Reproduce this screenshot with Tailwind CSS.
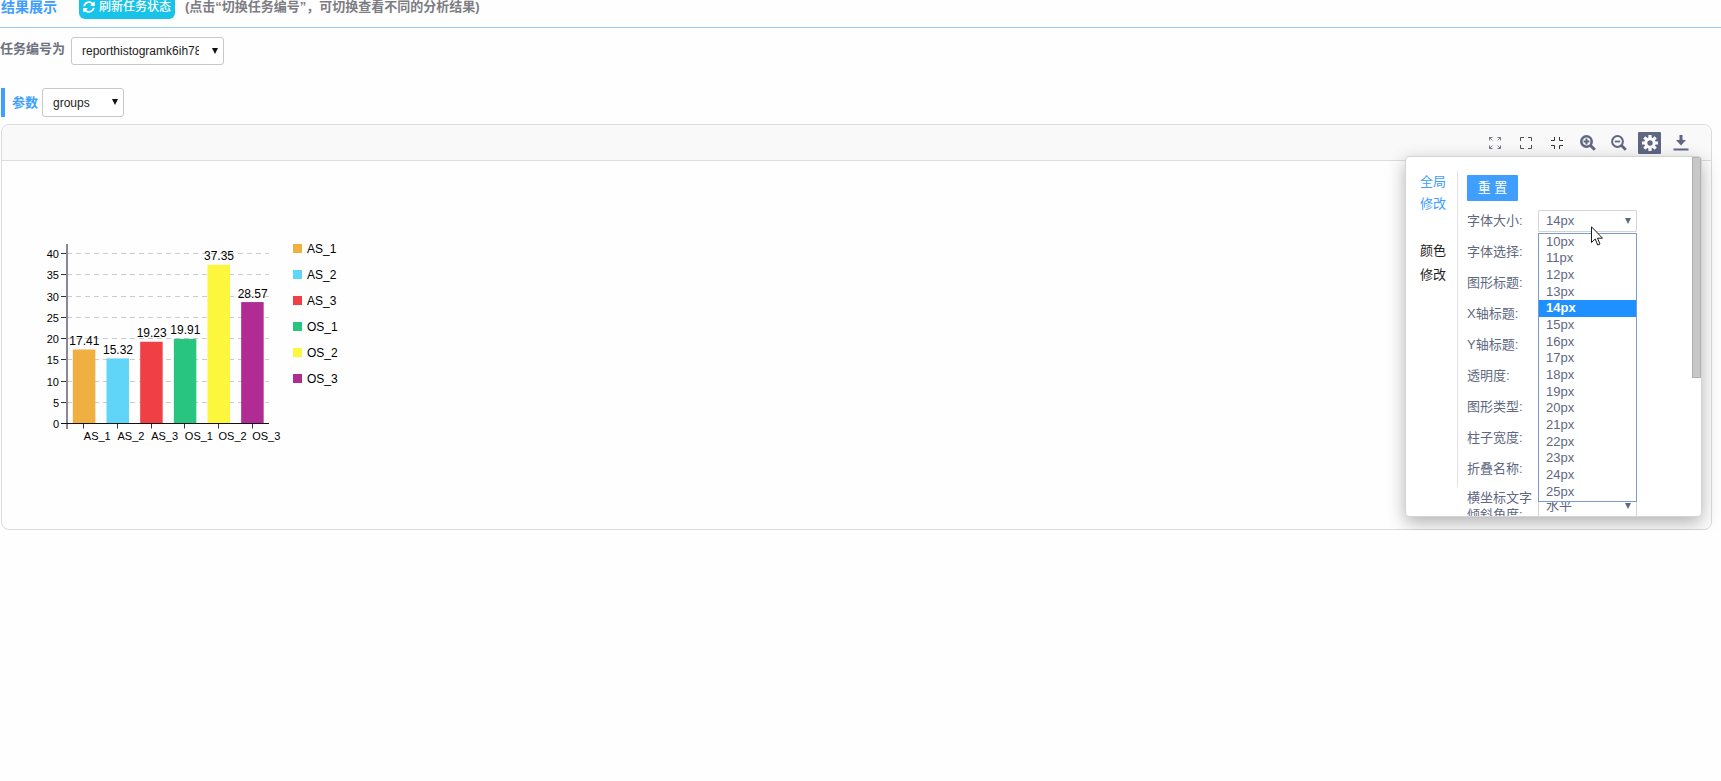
<!DOCTYPE html>
<html lang="zh-CN">
<head>
  <meta charset="UTF-8" />
  <meta name="viewport" content="width=device-width, initial-scale=1.0"/>
  <title>结果展示</title>
  <script src="https://cdn.jsdelivr.net/npm/@tailwindcss/browser@4"></script>
  <style>
    body {
      font-family: 'Liberation Sans', 'Noto Sans CJK SC', sans-serif;
    }
  </style>
</head>
<body class="bg-[#fefefe] text-[13px] text-[#606880] overflow-hidden">
  <div class="flex flex-col">
    <header class="-mt-[13px] h-[41px] flex items-center border-b border-[#9cccf8]">
      <h2 class="ml-px text-sm font-bold text-[#409eff]">结果展示</h2>
      <button type="button" class="ml-[22px] h-6 px-1 flex items-center gap-1 rounded-md bg-[#17c3e8] text-xs font-medium text-white">
        <svg class="w-3 h-3" viewBox="0 0 512 512" fill="currentColor">
          <path d="M370.72 133.28C339.458 104.008 298.888 87.962 255.848 88c-77.458.068-144.328 53.178-162.791 126.85-1.344 5.363-6.122 9.15-11.651 9.15H24.103c-7.498 0-13.194-6.807-11.807-14.176C33.933 94.924 134.813 8 256 8c66.448 0 126.791 26.136 171.315 68.685L463.03 40.97C478.149 25.851 504 36.559 504 57.941V192c0 13.255-10.745 24-24 24H345.941c-21.382 0-32.09-25.851-16.971-40.971l41.75-41.749zM32 296h134.059c21.382 0 32.09 25.851 16.971 40.971l-41.75 41.75c31.262 29.273 71.835 45.319 114.876 45.28 77.418-.07 144.315-53.144 162.787-126.849 1.344-5.363 6.122-9.15 11.651-9.15h57.304c7.498 0 13.194 6.807 11.807 14.176C478.067 417.076 377.187 504 256 504c-66.448 0-126.791-26.136-171.315-68.685L48.97 471.03C33.851 486.149 8 475.441 8 454.059V320c0-13.255 10.745-24 24-24z"/>
        </svg>
        刷新任务状态
      </button>
      <span class="ml-[10px] font-bold text-[#7c7c82]">(点击“切换任务编号”，可切换查看不同的分析结果)</span>
    </header>

    <div class="mt-[9px] flex items-start">
      <label for="task" class="w-[71px] leading-6 font-bold text-[#6c7280]">任务编号为</label>
      <div class="relative">
        <select id="task" class="appearance-none block w-[153px] h-7 pl-[10px] pr-6 border border-[#c8c8c8] rounded-[3px] bg-white text-xs text-[#222]">
          <option>reporthistogramk6ih78v2</option>
        </select>
        <svg class="absolute right-[6px] top-[11px] w-[6px] h-[6px] pointer-events-none" viewBox="0 0 6 6"><path d="M0 0h6L3 6z" fill="#111"/></svg>
      </div>
    </div>

    <div class="mt-[23px] ml-px h-[29px] flex items-center border-l-4 border-[#409eff]">
      <label for="param" class="pl-[7px] w-[37px] whitespace-nowrap font-bold text-[#409eff]">参数</label>
      <div class="relative">
        <select id="param" class="appearance-none block w-[82px] h-[29px] pl-[10px] pr-6 border border-[#c8c8c8] rounded-[3px] bg-white text-xs text-[#222]">
          <option>groups</option>
        </select>
        <svg class="absolute right-[6px] top-[11px] w-[6px] h-[6px] pointer-events-none" viewBox="0 0 6 6"><path d="M0 0h6L3 6z" fill="#111"/></svg>
      </div>
    </div>

    <section class="relative mt-[7px] ml-px mr-[9px] border border-[#dcdcdc] rounded-lg">
      <!-- toolbar -->
      <div class="h-9 pr-[19px] flex items-center justify-end gap-2 rounded-t-lg border-b border-[#dcdcdc] bg-[#f9f9f9] text-[#5f6783]">
        <button type="button" aria-label="放大画布" class="w-[23px] h-[22px] flex items-center justify-center">
          <svg class="w-3 h-3" viewBox="0 0 12 12" fill="none" stroke="#777b84"><path d="M.5 3.5v-3h3M.5.5l3 3M8.500 .5h3v3M11.500 .5l-3 3M.5 8.500v3h3M.5 11.500l3-3M11.500 8.500v3h-3M11.500 11.500l-3-3"/></svg>
        </button>
        <button type="button" aria-label="全屏" class="w-[23px] h-[22px] flex items-center justify-center">
          <svg class="w-3 h-3" viewBox="0 0 12 12" fill="none" stroke="#4c5058"><path d="M.5 4V.5H4M8 .5h3.500V4M.5 8v3.500H4M11.500 8v3.500H8"/></svg>
        </button>
        <button type="button" aria-label="缩小画布" class="w-[23px] h-[22px] flex items-center justify-center">
          <svg class="w-3 h-3" viewBox="0 0 12 12" fill="none" stroke="#30343c"><path d="M0 3.500h3.500V0M8.500 0v3.500H12M0 8.500h3.500V12M8.500 12V8.500H12"/></svg>
        </button>
        <button type="button" aria-label="放大" class="w-[23px] h-[22px] flex items-center justify-center">
          <svg class="w-4 h-4" viewBox="0 0 16 16" fill="none" stroke="currentColor" stroke-width="2.600"><circle cx="6.500" cy="6.500" r="5.200"/><path d="M10.500 10.500l4.300 4.300" stroke-width="3"/><path d="M3.600 6.500h5.800M6.500 3.600v5.800" stroke-width="2"/></svg>
        </button>
        <button type="button" aria-label="缩小" class="w-[23px] h-[22px] flex items-center justify-center">
          <svg class="w-4 h-4" viewBox="0 0 16 16" fill="none" stroke="currentColor" stroke-width="2"><circle cx="6.500" cy="6.500" r="5.400"/><path d="M10.500 10.500l4.300 4.300" stroke-width="2.800"/><path d="M3.800 6.500h5.400" stroke-width="1.800"/></svg>
        </button>
        <button type="button" aria-label="设置" class="w-[23px] h-[22px] flex items-center justify-center rounded-[1px] bg-[#5f6783] text-white">
          <svg class="w-4 h-4" viewBox="0 0 16 16" stroke="currentColor" fill="none">
            <circle cx="8" cy="8" r="4.200" stroke-width="3"/>
            <path d="M8 0v3M8 13v3M0 8h3M13 8h3M2.350 2.350l2 2M11.650 11.650l2 2M2.350 13.650l2-2M11.650 4.350l2-2" stroke-width="3.200"/>
          </svg>
        </button>
        <button type="button" aria-label="下载" class="w-[23px] h-[22px] flex items-center justify-center">
          <svg class="w-4 h-4" viewBox="0 0 16 16" fill="currentColor"><path d="M6.500 0h3v5H13l-5 5.500L3 5h3.500zM.5 13.500h15v2H.5z"/></svg>
        </button>
      </div>

      <!-- histogram -->
      <div class="h-[368px]">
        <svg id="chart" class="w-[400px] h-[320px]" viewBox="2 161 400 320" font-family="Liberation Sans, sans-serif" fill="#000"></svg>
      </div>

      <!-- settings panel -->
      <div class="absolute z-10 right-[9px] top-[31px] w-[297px] h-[361px] rounded border border-[#d4d4d4] bg-white shadow-[0_6px_18px_rgba(0,0,0,0.3)] overflow-hidden flex">
        <div class="ml-[14px] mt-[14px] w-[38px] h-[316px] shrink-0 border-r border-[#e2e2e2]">
          <a href="#" class="block w-7 leading-[22px] text-[#409eff]">全局修改</a>
          <a href="#" class="block mt-6 w-7 leading-6 text-[#222]">颜色修改</a>
        </div>
        <form class="ml-[9px] pt-[18px] w-[170px] shrink-0">
          <button type="button" class="block w-[51px] h-[26px] mb-[9px] rounded-[1px] bg-[#409eff] text-white">重 置</button>
          <div class="flex flex-col gap-[10px]">
            <div class="h-[21px] flex items-center">
              <label for="size" class="w-[71px] whitespace-nowrap">字体大小:</label>
              <div class="relative">
                <select id="size" class="appearance-none block w-[99px] h-[22px] pl-[7px] border border-[#d4d4d4] rounded-[1px] bg-white">
                  <option>14px</option>
                </select>
                <svg class="absolute right-[6px] top-[8px] w-[6px] h-[6px] pointer-events-none" viewBox="0 0 6 6"><path d="M0 0h6L3 6z" fill="#5f6783"/></svg>
                <ul role="listbox" aria-label="字体大小" class="absolute z-10 left-0 top-[23px] w-[99px] h-[269px] grid grid-rows-16 leading-4 border border-[#7a9bd0] bg-white">
                  <li role="option" class="pl-[7px]">10px</li>
                  <li role="option" class="pl-[7px]">11px</li>
                  <li role="option" class="pl-[7px]">12px</li>
                  <li role="option" class="pl-[7px]">13px</li>
                  <li role="option" aria-selected="true" class="pl-[7px] bg-[#1e90ff] font-bold text-white">14px</li>
                  <li role="option" class="pl-[7px]">15px</li>
                  <li role="option" class="pl-[7px]">16px</li>
                  <li role="option" class="pl-[7px]">17px</li>
                  <li role="option" class="pl-[7px]">18px</li>
                  <li role="option" class="pl-[7px]">19px</li>
                  <li role="option" class="pl-[7px]">20px</li>
                  <li role="option" class="pl-[7px]">21px</li>
                  <li role="option" class="pl-[7px]">22px</li>
                  <li role="option" class="pl-[7px]">23px</li>
                  <li role="option" class="pl-[7px]">24px</li>
                  <li role="option" class="pl-[7px]">25px</li>
                </ul>
              </div>
            </div>
            <div class="h-[21px] flex items-center">
              <label for="family" class="w-[71px] whitespace-nowrap">字体选择:</label>
              <select id="family" class="appearance-none w-[99px] h-[22px] border border-[#d4d4d4]"></select>
            </div>
            <div class="h-[21px] flex items-center">
              <label for="title" class="w-[71px] whitespace-nowrap">图形标题:</label>
              <input id="title" type="text" class="w-[99px] h-[22px] border border-[#d4d4d4]"/>
            </div>
            <div class="h-[21px] flex items-center">
              <label for="xtitle" class="w-[71px] whitespace-nowrap">X轴标题:</label>
              <input id="xtitle" type="text" class="w-[99px] h-[22px] border border-[#d4d4d4]"/>
            </div>
            <div class="h-[21px] flex items-center">
              <label for="ytitle" class="w-[71px] whitespace-nowrap">Y轴标题:</label>
              <input id="ytitle" type="text" class="w-[99px] h-[22px] border border-[#d4d4d4]"/>
            </div>
            <div class="h-[21px] flex items-center">
              <label for="opacity" class="w-[71px] whitespace-nowrap">透明度:</label>
              <input id="opacity" type="text" class="w-[99px] h-[22px] border border-[#d4d4d4]"/>
            </div>
            <div class="h-[21px] flex items-center">
              <label for="type" class="w-[71px] whitespace-nowrap">图形类型:</label>
              <select id="type" class="appearance-none w-[99px] h-[22px] border border-[#d4d4d4]"></select>
            </div>
            <div class="h-[21px] flex items-center">
              <label for="barwidth" class="w-[71px] whitespace-nowrap">柱子宽度:</label>
              <input id="barwidth" type="text" class="w-[99px] h-[22px] border border-[#d4d4d4]"/>
            </div>
            <div class="h-[21px] flex items-center">
              <label for="fold" class="w-[71px] whitespace-nowrap">折叠名称:</label>
              <select id="fold" class="appearance-none w-[99px] h-[22px] border border-[#d4d4d4]"></select>
            </div>
            <div class="flex items-center">
              <label for="angle" class="w-[71px] pr-1 leading-[17px]">横坐标文字倾斜角度:</label>
              <div class="relative">
                <select id="angle" class="appearance-none block w-[99px] h-[22px] pl-[7px] border border-[#d4d4d4] bg-white">
                  <option>水平</option>
                </select>
                <svg class="absolute right-[6px] top-[8px] w-[6px] h-[6px] pointer-events-none" viewBox="0 0 6 6"><path d="M0 0h6L3 6z" fill="#5f6783"/></svg>
              </div>
            </div>
          </div>
        </form>
        <!-- scroll thumb -->
        <div class="ml-auto w-[9px] h-[221px] border border-[#b0b0b0] bg-[#c8c8c8]"></div>
      </div>

      <!-- pointer -->
      <svg class="absolute z-20 right-[108px] top-[101px] w-3 h-5 pointer-events-none" viewBox="0 0 12 20"><path d="M.5.8v15.700l3.700-3.500 2.500 6 2.300-1-2.500-5.800h5z" fill="#fff" stroke="#1a1a1a"/></svg>
    </section>
  </div>

  <script>
    const data = [
      { name: "AS_1", value: 17.41, color: "#efaf41" },
      { name: "AS_2", value: 15.32, color: "#61d5f7" },
      { name: "AS_3", value: 19.23, color: "#f04046" },
      { name: "OS_1", value: 19.91, color: "#28c581" },
      { name: "OS_2", value: 37.35, color: "#fcf63c" },
      { name: "OS_3", value: 28.57, color: "#b02c94" }
    ];
    const left = 67, right = 269, bottom = 423.5, unit = 4.25;
    const step = (right - left) / data.length;
    let out = "";

    for (let v = 0; v <= 40; v += 5) {
      const y = Math.round(bottom - v * unit - 0.5) + 0.5;
      if (v) out += `<path d="M${left} ${y}H${right}" stroke="#ccc" stroke-dasharray="5 4"/>`;
      out += `<path d="M61 ${y}h6" stroke="#333"/>`;
      out += `<text x="59" y="${y + 4}" font-size="11" text-anchor="end">${v}</text>`;
    }

    data.forEach((d, i) => {
      const mid = left + step * (i + 0.5);
      const top = bottom - d.value * unit;
      out += `<rect x="${mid - 11}" y="${top}" width="22.5" height="${bottom - top}" fill="${d.color}"/>`;
      out += `<path d="M${Math.floor(mid) + 0.5} ${bottom}v5" stroke="#333"/>`;
      out += `<text x="${mid + 0.5}" y="${top - 4.5}" font-size="12" text-anchor="middle">${d.value}</text>`;
      out += `<text x="${mid}" y="440" font-size="11">${d.name}</text>`;
      out += `<rect x="293" y="${244 + i * 26}" width="9" height="9" fill="${d.color}"/>`;
      out += `<text x="307" y="${253 + i * 26}" font-size="12">${d.name}</text>`;
    });

    out += `<path d="M67 244V429" stroke="#8b8894" stroke-width="2"/>`;
    out += `<path d="M61 ${bottom}H${right}" stroke="#111"/>`;
    document.getElementById("chart").innerHTML = out;
  </script>
</body>
</html>
